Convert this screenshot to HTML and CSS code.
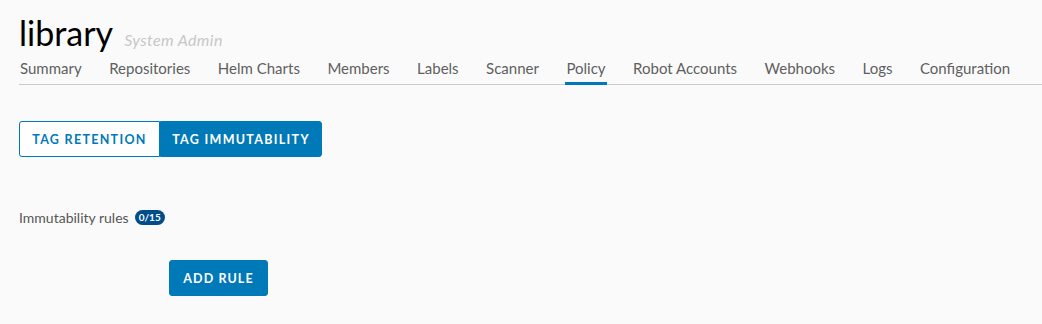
FILE: index.html
```html
<!DOCTYPE html>
<html lang="en">
<head>
    <meta charset="UTF-8">
    <title>library - Policy</title>
    <link rel="stylesheet" href="styles.css">
</head>
<body>
    <div class="container">
        <div class="project-title">
            <h1>library</h1>
            <span class="role">System Admin</span>
        </div>

        <ul class="tabs">
            <li>Summary</li>
            <li>Repositories</li>
            <li>Helm Charts</li>
            <li>Members</li>
            <li>Labels</li>
            <li>Scanner</li>
            <li class="active">Policy</li>
            <li>Robot Accounts</li>
            <li>Webhooks</li>
            <li>Logs</li>
            <li>Configuration</li>
        </ul>

        <div class="btn-group">
            <button class="btn btn-outline">Tag Retention</button>
            <button class="btn btn-primary">Tag Immutability</button>
        </div>

        <div class="rules-label">
            Immutability rules <span class="badge">0/15</span>
        </div>

        <div class="add-rule">
            <button class="btn btn-primary btn-single">Add Rule</button>
        </div>
    </div>
</body>
</html>
```

FILE: styles.css
```css
body {
    font-family: Lato, "Open Sans", sans-serif;
    background-color: #fafafa;
    color: #565656;
    margin: 0;
    padding: 0;
}

.container {
    padding: 14px 0 0 19px;
}

/* Titre du projet */
.project-title {
    display: flex;
    align-items: baseline;
    gap: 11px;
    height: 38px;
}

.project-title h1 {
    font-size: 34px;
    font-weight: 400;
    color: #000;
    margin: 0;
    line-height: 38px;
}

.role {
    font-size: 16px;
    font-style: italic;
    color: #c7c7c7;
    letter-spacing: 0.4px;
}

/* Onglets */
.tabs {
    list-style: none;
    margin: 0;
    padding: 0;
    display: flex;
    gap: 25.5px;
    border-bottom: 1px solid #ccc;
    font-size: 15px;
}

.tabs li {
    padding: 5px 1px 0;
    line-height: 22px;
    height: 25px;
    border-bottom: 3px solid transparent;
    margin-bottom: -1px;
    color: #5f5f5f;
    white-space: nowrap;
}

.tabs li.active {
    border-bottom-color: #0079b8;
}

/* Boutons */
.btn-group {
    display: flex;
    margin-top: 36px;
}

.btn {
    font-family: inherit;
    font-size: 12.5px;
    font-weight: 700;
    letter-spacing: 1.3px;
    text-transform: uppercase;
    white-space: nowrap;
    height: 36px;
    padding: 0;
    border: 1px solid #0079b8;
    cursor: pointer;
}

.btn-outline {
    background-color: #fff;
    color: #0079b8;
    border-radius: 3px 0 0 3px;
    width: 141px;
}

.btn-primary {
    background-color: #0079b8;
    color: #fff;
    border-radius: 0 3px 3px 0;
    width: 162px;
}

.btn-single {
    border-radius: 3px;
    width: 99px;
    letter-spacing: 1.1px;
}

.rules-label {
    margin-top: 52px;
    font-size: 14px;
    display: flex;
    align-items: center;
    gap: 6px;
}

.badge {
    background-color: #004d8a;
    color: #fff;
    font-size: 10px;
    font-weight: 700;
    border-radius: 8px;
    padding: 1px 4px;
    line-height: 13px;
}

.add-rule {
    margin-top: 34px;
    padding-left: 150px;
}
```
